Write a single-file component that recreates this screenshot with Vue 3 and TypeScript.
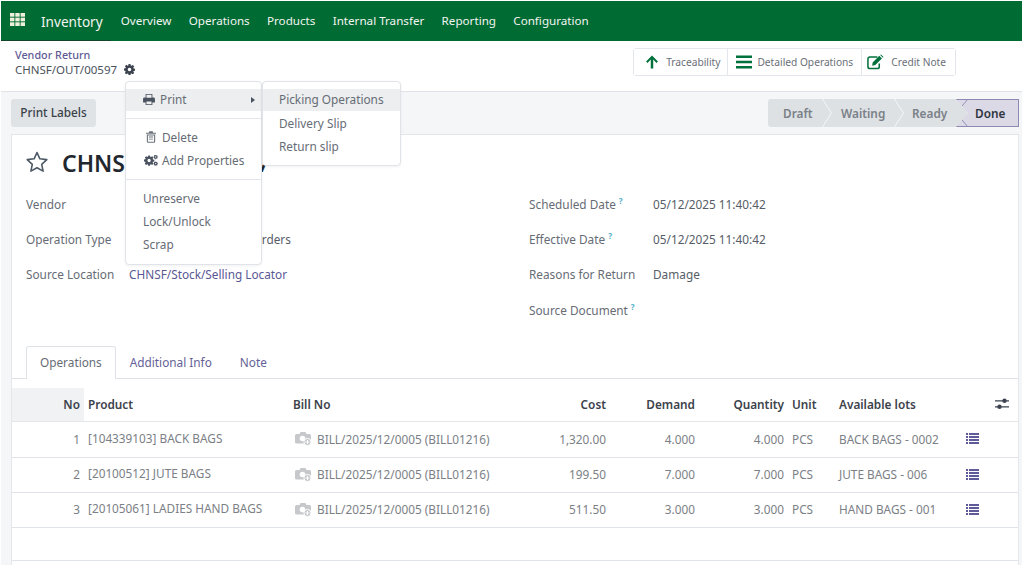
<template>
  <div class="page">
    <header class="navbar">
      <svg class="apps" viewBox="0 0 15 13" width="15" height="13">
        <rect v-for="c in appCells" :key="c.k" :x="c.x" :y="c.y" width="4.4" height="3.700" fill="#eef0dc" />
      </svg>
      <span class="brand">Inventory</span>
      <nav class="menu">
        <a v-for="m in menus" :key="m">{{ m }}</a>
      </nav>
    </header>

    <section class="control">
      <div class="crumbs">
        <a class="crumb">Vendor Return</a>
        <div class="current">
          <span>CHNSF/OUT/00597</span>
          <svg viewBox="0 0 16 16" width="11" height="11" class="gear">
            <path fill="#3d4450" fill-rule="evenodd" :d="gearPath" />
          </svg>
        </div>
      </div>
      <div class="stats">
        <button class="stat">
          <svg viewBox="0 0 16 16" width="14" height="14"><path fill="#00713a" d="M8 .5l6.800 6.900-1.700 1.600-3.700-3.800V15.500H6.600V5.200L2.900 9 1.200 7.400z" /></svg>
          <span>Traceability</span>
        </button>
        <button class="stat">
          <svg viewBox="0 0 16 16" width="16" height="16"><path fill="#00713a" d="M0 1.500h16v2.600H0zM0 6.700h16v2.600H0zM0 11.900h16v2.600H0z" /></svg>
          <span>Detailed Operations</span>
        </button>
        <button class="stat">
          <svg viewBox="0 0 18 16" width="17" height="16">
            <path fill="none" stroke="#00713a" stroke-width="1.600" d="M13 9.500v3.500a2 2 0 0 1-2 2H3a2 2 0 0 1-2-2V4.800a2 2 0 0 1 2-2h8" />
            <path fill="#00713a" d="M6 8.500 13 1.500l2.800 2.800-7 7L5.500 12zM14 .6l.8-.6 2.700 2.700-.7.8z" />
          </svg>
          <span>Credit Note</span>
        </button>
      </div>
    </section>

    <main class="content">
      <div class="statusbar">
        <button class="print-labels">Print Labels</button>
        <div class="pipeline">
          <span class="step first">Draft</span>
          <span class="step waiting">Waiting</span>
          <span class="step ready">Ready</span>
          <span class="step done">Done</span>
        </div>
      </div>

      <div class="sheet">
        <div class="title-row">
          <svg viewBox="0 0 24 24" width="24" height="24">
            <path fill="none" stroke="#4d5a66" stroke-width="1.600" stroke-linejoin="round" d="M12 2.500l2.900 6.300 6.900.8-5.100 4.700 1.400 6.800-6.100-3.400-6.100 3.400 1.400-6.800-5.100-4.700 6.900-.8z" />
          </svg>
          <h1>CHNSF/OUT/00597</h1>
        </div>

        <div class="groups">
          <div class="group">
            <div v-for="f in leftFields" :key="f.label" class="field">
              <label>{{ f.label }}</label>
              <a class="value link" :class="{ muted: f.muted }">{{ f.value }}</a>
            </div>
          </div>
          <div class="group right">
            <div v-for="f in rightFields" :key="f.label" class="field">
              <label>{{ f.label }}<sup v-if="f.help">?</sup></label>
              <span class="value">{{ f.value }}</span>
            </div>
          </div>
        </div>

        <ul class="tabs">
          <li class="active">Operations</li>
          <li>Additional Info</li>
          <li>Note</li>
        </ul>

        <table class="lines">
          <colgroup>
            <col style="width: 72px" /><col style="width: 205px" /><col style="width: 250px" />
            <col style="width: 71px" /><col style="width: 89px" /><col style="width: 89px" />
            <col style="width: 47px" /><col style="width: 127px" /><col />
          </colgroup>
          <thead>
            <tr>
              <th class="num no">No</th>
              <th>Product</th>
              <th>Bill No</th>
              <th class="num">Cost</th>
              <th class="num">Demand</th>
              <th class="num">Quantity</th>
              <th>Unit</th>
              <th>Available lots</th>
              <th class="opt">
                <svg viewBox="0 0 14 12" width="14" height="12">
                  <path fill="#3d4450" d="M0 2.200h14v1.200H0zM0 8.200h14v1.200H0z" />
                  <circle cx="9.500" cy="2.800" r="2.200" fill="#3d4450" /><circle cx="4.500" cy="8.800" r="2.200" fill="#3d4450" />
                </svg>
              </th>
            </tr>
          </thead>
          <tbody>
            <tr v-for="r in rows" :key="r.no">
              <td class="num">{{ r.no }}</td>
              <td class="product">{{ r.product }}</td>
              <td>
                <div class="bill">
                  <svg viewBox="0 0 17 15" width="17" height="15">
                    <path fill="#c6c8cb" d="M1.500 3h3l1-2h5l1 2h3A1.500 1.500 0 0 1 16 4.500V11a1.500 1.500 0 0 1-1.500 1.500h-13A1.500 1.500 0 0 1 0 11V4.500A1.500 1.500 0 0 1 1.500 3z" />
                    <circle cx="7.500" cy="7.500" r="2.800" fill="#fff" />
                    <circle cx="12.500" cy="11" r="3.600" fill="#c6c8cb" stroke="#fff" />
                    <path fill="#fff" d="M12 9h1v1.500h1.500v1H13V13h-1v-1.500h-1.500v-1H12z" />
                  </svg>
                  <span>{{ bill }}</span>
                </div>
              </td>
              <td class="num">{{ r.cost }}</td>
              <td class="num">{{ r.demand }}</td>
              <td class="num">{{ r.demand }}</td>
              <td>PCS</td>
              <td>{{ r.lot }}</td>
              <td class="list-cell">
                <svg viewBox="0 0 13 11" width="13" height="11">
                  <path fill="#5f5b9a" d="M0 0h2v2H0zM3 0h10v2H3zM0 3h2v2H0zM3 3h10v2H3zM0 6h2v2H0zM3 6h10v2H3zM0 9h2v2H0zM3 9h10v2H3z" />
                </svg>
              </td>
            </tr>
            <tr class="filler"><td colspan="9"></td></tr>
          </tbody>
        </table>
      </div>
    </main>

    <!-- open action menu, lies over the form -->
    <div class="dropdown action-menu">
      <div class="item hover">
        <svg viewBox="0 0 14 13" width="12" height="11" class="ico">
          <path fill="#4a5260" fill-rule="evenodd" d="M3 0h8v4h1.500A1.500 1.500 0 0 1 14 5.500V10h-3v3H3v-3H0V5.500A1.500 1.500 0 0 1 1.500 4H3zm1 1v3.500h6V1zm0 8v3h6V9z" />
        </svg>
        <span>Print</span>
        <i class="caret"></i>
      </div>
      <hr />
      <div class="item">
        <svg viewBox="0 0 12 14" width="10" height="12" class="ico trash">
          <path fill="#6a717a" fill-rule="evenodd" d="M4 0h4l.7 2H12v1.200H0V2h3.300zM1 4h10v8.500A1.500 1.500 0 0 1 9.500 14h-7A1.500 1.500 0 0 1 1 12.500zm1.300 1.300V12.700h7.400V5.300z" />
          <path fill="#6a717a" d="M3.500 6.500h5v1h-5zM3.500 9h5v1h-5z" />
        </svg>
        <span>Delete</span>
      </div>
      <div class="item">
        <svg viewBox="0 0 22 16" width="14" height="11" class="ico cogs">
          <g fill="#4a5260" fill-rule="evenodd">
            <path :d="gearPath" />
            <path :d="gearPath" transform="translate(15 -1) scale(.42)" />
            <path :d="gearPath" transform="translate(15 9.500) scale(.42)" />
          </g>
        </svg>
        <span>Add Properties</span>
      </div>
      <hr />
      <div class="item plain">Unreserve</div>
      <div class="item plain">Lock/Unlock</div>
      <div class="item plain">Scrap</div>
    </div>

    <div class="dropdown print-menu">
      <div class="item hover">Picking Operations</div>
      <div class="item">Delivery Slip</div>
      <div class="item">Return slip</div>
    </div>
  </div>
</template>

<script setup lang="ts">
interface Field {
  label: string
  value: string
  help?: boolean
  muted?: boolean
}

const gearPath =
  'M6.600 0h2.800l.4 2.100 1.200.5 1.800-1.200 2 2-1.200 1.800.5 1.200 2.100.4v2.800l-2.100.4-.5 1.200 1.200 1.800-2 2-1.800-1.200-1.200.5-.4 2.100H6.600l-.4-2.100-1.200-.5-1.800 1.200-2-2 1.200-1.800-.5-1.200L0 9.400V6.600l2.100-.4.5-1.200-1.200-1.800 2-2 1.800 1.200 1.200-.5zM8 5.400a2.600 2.600 0 1 0 0 5.200 2.600 2.600 0 0 0 0-5.200z'

const menus = ['Overview', 'Operations', 'Products', 'Internal Transfer', 'Reporting', 'Configuration']

const appCells = [0, 1, 2].flatMap((r) =>
  [0, 1, 2].map((c) => ({ k: `${r}-${c}`, x: c * 5.3, y: r * 4.65 }))
)

const leftFields: Field[] = [
  { label: 'Vendor', value: '' },
  { label: 'Operation Type', value: 'CHNSF: Goods Return Orders', muted: true },
  { label: 'Source Location', value: 'CHNSF/Stock/Selling Locator' }
]

const rightFields: Field[] = [
  { label: 'Scheduled Date', value: '05/12/2025 11:40:42', help: true },
  { label: 'Effective Date', value: '05/12/2025 11:40:42', help: true },
  { label: 'Reasons for Return', value: 'Damage' },
  { label: 'Source Document', value: '', help: true }
]

const bill = 'BILL/2025/12/0005 (BILL01216)'

const rows = [
  { no: 1, product: '[104339103] BACK BAGS', cost: '1,320.00', demand: '4.000', lot: 'BACK BAGS - 0002' },
  { no: 2, product: '[20100512] JUTE BAGS', cost: '199.50', demand: '7.000', lot: 'JUTE BAGS - 006' },
  { no: 3, product: '[20105061] LADIES HAND BAGS', cost: '511.50', demand: '3.000', lot: 'HAND BAGS - 001' }
]
</script>

<style>
html,
body {
  margin: 0;
  background: #fff;
}
</style>

<style scoped>
.page {
  position: relative;
  width: 1024px;
  height: 565px;
  overflow: hidden;
  padding: 1px 2px 0 1px;
  box-sizing: border-box;
  font-family: 'Noto Sans', sans-serif;
  font-size: 11.8px;
  color: #666c75;
  display: flex;
  flex-direction: column;
}

.navbar {
  position: relative;
  height: 40px;
  flex: none;
  background: #006b33;
  color: #f2f5f1;
  display: flex;
  align-items: center;
  padding-left: 9px;
}

.navbar::after {
  content: '';
  position: absolute;
  left: 0;
  bottom: 0;
  width: 110px;
  height: 1px;
  background: #14452c;
}

.apps {
  margin: -3px 16px 0 0;
}

.brand {
  font-size: 13.6px;
  margin-right: 18px;
}

.menu {
  display: flex;
  gap: 17.3px;
  font-size: 11.65px;
  margin-top: -1px;
}

.control {
  height: 51px;
  flex: none;
  background: #fff;
  border-bottom: 1px solid #dfe2e6;
  display: flex;
  justify-content: space-between;
  padding: 7px 66px 0 14px;
  box-sizing: border-box;
}

.crumb {
  display: block;
  color: #5f5b94;
  font-size: 10.8px;
  line-height: 14px;
  font-weight: 500;
}

.current {
  display: flex;
  align-items: center;
  gap: 7px;
  font-size: 11.5px;
  line-height: 15px;
  color: #4b525c;
}

.stats {
  display: flex;
  border: 1px solid #e3e6ea;
  border-radius: 3px;
  height: 28px;
  box-sizing: border-box;
}

.stat {
  display: flex;
  align-items: center;
  gap: 7px;
  padding: 0 7px 0 11px;
  border: 0;
  border-left: 1px solid #e3e6ea;
  background: #fff;
  font: inherit;
  font-size: 10.2px;
  color: #6a7078;
  white-space: nowrap;
}

.stat:first-child {
  border-left: 0;
}

.stat:nth-child(2) {
  padding: 0 8px;
  gap: 5px;
}

.stat:nth-child(3) {
  padding: 0 9px 0 5px;
}

.content {
  flex: 1;
  background: #f5f6f8;
  padding: 7px 3px 0 10px;
  min-height: 0;
}

.statusbar {
  display: flex;
  justify-content: space-between;
  align-items: center;
  height: 28px;
}

.print-labels {
  width: 85px;
  height: 28px;
  border: 0;
  border-radius: 3px;
  background: #dfe3e6;
  color: #3a4149;
  font: inherit;
  font-weight: 500;
  padding: 0 0 2px;
}

.pipeline {
  display: flex;
  height: 28px;
}

.step {
  position: relative;
  background: #dde1e4;
  color: #7a8087;
  font-weight: 600;
  display: flex;
  align-items: center;
  padding-bottom: 1px;
  box-sizing: border-box;
  clip-path: polygon(0 0, calc(100% - 9px) 0, 100% 50%, calc(100% - 9px) 100%, 0 100%, 9px 50%);
  margin-left: -8px;
}

.step.first {
  clip-path: polygon(0 0, calc(100% - 9px) 0, 100% 50%, calc(100% - 9px) 100%, 0 100%);
  border-radius: 3px 0 0 3px;
  margin-left: 0;
  width: 63px;
  padding-left: 15px;
}

.step.waiting {
  width: 80px;
  padding-left: 18px;
}

.step.ready {
  width: 73px;
  padding-left: 17px;
}

.step.done {
  width: 63px;
  margin-left: -12px;
  padding-left: 19px;
  background: #dcd9e7;
  color: #2f3540;
  clip-path: polygon(0 0, 100% 0, 100% 100%, 0 100%, 12px 50%);
  border-radius: 0 3px 3px 0;
}

.step.done::before {
  content: '';
  position: absolute;
  inset: 0;
  background: linear-gradient(#8e89b3, #8e89b3) top / 100% 1px no-repeat,
    linear-gradient(#8e89b3, #8e89b3) bottom / 100% 1px no-repeat,
    linear-gradient(#8e89b3, #8e89b3) right / 1px 100% no-repeat,
    linear-gradient(to top right, transparent calc(50% - 0.7px), #8e89b3 50%, transparent calc(50% + 0.7px)) left bottom / 12px 50% no-repeat,
    linear-gradient(to bottom right, transparent calc(50% - 0.7px), #8e89b3 50%, transparent calc(50% + 0.7px)) left top / 12px 50% no-repeat;
}

.sheet {
  margin-top: 7px;
  background: #fff;
  border: 1px solid #e3e6ea;
  border-bottom: 0;
  height: 440px;
  box-sizing: border-box;
  display: flex;
  flex-direction: column;
}

.title-row {
  display: flex;
  align-items: center;
  gap: 13px;
  height: 34px;
  flex: none;
  margin-top: 10px;
  padding-left: 13px;
}

h1 {
  margin: 2px 0 0;
  font-size: 23px;
  font-weight: 600;
  color: #22272e;
}

.groups {
  display: flex;
  flex: none;
  margin-top: 7px;
  height: 161px;
}

.group {
  width: 503px;
  padding-left: 14px;
  box-sizing: border-box;
}

.group.right {
  padding-left: 14px;
}

.field {
  display: flex;
  height: 35.4px;
  align-items: center;
}

.field label {
  width: 103px;
  flex: none;
  white-space: nowrap;
}

.right .field label {
  width: 124px;
}

sup {
  color: #4fb0cc;
  font-size: 8px;
  font-weight: 700;
  margin-left: 3px;
  line-height: 0;
}

.value {
  color: #565d67;
  white-space: nowrap;
}

.value.link {
  color: #5a5794;
}

.value.link.muted {
  color: #565d67;
}

.tabs {
  display: flex;
  flex: none;
  list-style: none;
  margin: -1px 0 0;
  padding: 0 0 0 14px;
  height: 33px;
  box-shadow: inset 0 -1px 0 #dfe2e6;
  color: #635f97;
}

.tabs li {
  padding: 0 13px 3px;
  display: flex;
  align-items: center;
  border: 1px solid transparent;
  border-bottom: 0;
}

.tabs li.active {
  color: #666c75;
  background: #fff;
  border-color: #dfe2e6;
  border-radius: 3px 3px 0 0;
}

.lines {
  margin-top: 9px;
  width: 100%;
  table-layout: fixed;
  border-collapse: collapse;
}

.lines th {
  height: 33px;
  padding: 0 4px 1px;
  box-sizing: border-box;
  text-align: left;
  font-weight: 600;
  color: #3c424b;
  border-bottom: 1px solid #e4e6ea;
}

.lines th.no {
  background: #f1f2f3;
}

.lines td {
  height: 35px;
  padding: 0 4px 1px;
  color: #7b8086;
  border-bottom: 1px solid #e0e3e7;
  white-space: nowrap;
  box-sizing: border-box;
}

.lines tbody tr:first-child td {
  height: 36px;
}

.lines .num {
  text-align: right;
}

.lines td.product {
  padding-bottom: 3px;
}

.filler td {
  height: 33px !important;
}

.bill {
  display: flex;
  align-items: center;
  gap: 5px;
  padding-left: 2px;
}

.opt {
  text-align: right !important;
  padding-right: 9px !important;
}

.list-cell {
  padding-left: 4px !important;
}

.list-cell svg,
.opt svg {
  display: block;
}

.opt svg {
  margin-left: auto;
}

.dropdown {
  position: absolute;
  background: #fff;
  border: 1px solid #e0e3e7;
  border-radius: 4px;
  box-shadow: 0 1px 3px rgba(0, 0, 0, 0.06);
  box-sizing: border-box;
  padding-top: 7px;
  color: #666c75;
}

.action-menu {
  left: 125px;
  top: 81px;
  width: 137px;
  height: 184px;
}

.print-menu {
  left: 262px;
  top: 81px;
  width: 139px;
  height: 85px;
}

.item {
  height: 23px;
  display: flex;
  align-items: center;
  padding-left: 17px;
  padding-bottom: 1px;
  box-sizing: border-box;
  position: relative;
}

.action-menu .item:first-child,
.print-menu .item:first-child {
  height: 22px;
  padding-bottom: 2px;
}

.print-menu .item {
  height: 23.5px;
  padding-left: 16px;
}

.print-menu .item:nth-child(2) {
  padding-bottom: 0;
}

.item.hover {
  background: #eceeef;
}

.ico {
  margin-right: 5px;
}

.ico.trash {
  margin-left: 3px;
  margin-right: 6px;
}

.ico.cogs {
  margin-left: 1px;
  margin-right: 4px;
}

.caret {
  position: absolute;
  right: 6px;
  top: 8px;
  border-left: 4px solid #4a5260;
  border-top: 3px solid transparent;
  border-bottom: 3px solid transparent;
}

hr {
  border: 0;
  border-top: 1px solid #e3e6ea;
  margin: 7px 0;
}
</style>
